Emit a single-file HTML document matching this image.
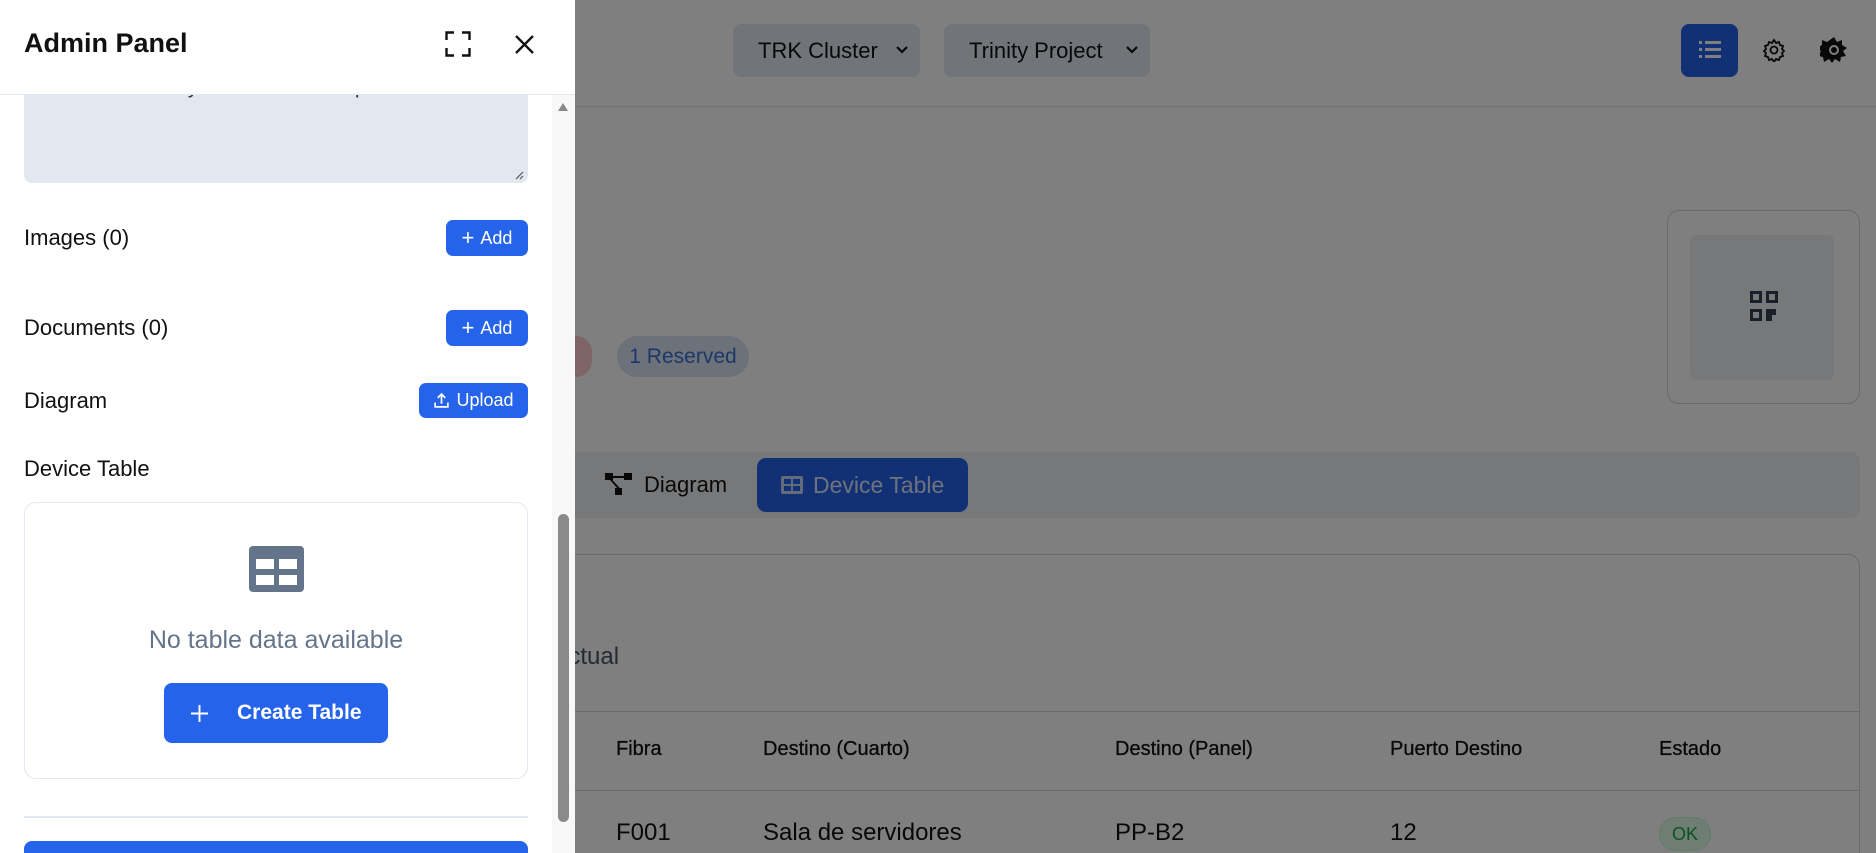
<!DOCTYPE html>
<html><head><meta charset="utf-8"><style>
*{box-sizing:border-box;margin:0;padding:0}
html,body{width:1876px;height:853px;overflow:hidden}
body{position:relative;background:#fff;font-family:"Liberation Sans",sans-serif;color:#111}
.abs{position:absolute}
.dd{position:absolute;top:24px;height:53px;background:#e2e8f0;border-radius:8px;font-size:22px;color:#111;display:flex;align-items:center;padding-left:25px}
.th{position:absolute;top:738px;font-size:20px;color:#111;-webkit-text-stroke:0.3px #111}
.td{position:absolute;top:819px;font-size:24px;color:#111}
.overlay{position:absolute;left:0;top:0;width:1876px;height:853px;background:rgba(0,0,0,.5)}
.panel{position:absolute;left:0;top:0;width:575px;height:853px;background:#fff;overflow:hidden}
.lbl{position:absolute;left:24px;font-size:22px;color:#111}
.btn{position:absolute;background:#2563eb;color:#fff;border-radius:7px;font-size:18px;display:flex;align-items:center;justify-content:center;gap:6px}
</style></head><body>
<div class="abs" style="left:0;top:106px;width:1876px;height:1px;background:#e5e7eb"></div>
<div class="dd" style="left:733px;width:187px">TRK Cluster<svg class="abs" style="left:162px;top:20px" width="14" height="12" viewBox="0 0 14 12"><path d="M2 3l5 5 5-5" stroke="#111" stroke-width="2.2" fill="none"/></svg></div>
<div class="dd" style="left:944px;width:206px">Trinity Project<svg class="abs" style="left:181px;top:20px" width="14" height="12" viewBox="0 0 14 12"><path d="M2 3l5 5 5-5" stroke="#111" stroke-width="2.2" fill="none"/></svg></div>
<div class="abs" style="left:1681px;top:24px;width:57px;height:53px;background:#2563eb;border-radius:8px"><svg class="abs" style="left:18px;top:16px" width="22" height="20" viewBox="0 0 22 20"><g fill="#fff"><rect x="0" y="1" width="3" height="3"/><rect x="6" y="1" width="16" height="3"/><rect x="0" y="8" width="3" height="3"/><rect x="6" y="8" width="16" height="3"/><rect x="0" y="15" width="3" height="3"/><rect x="6" y="15" width="16" height="3"/></g></svg></div>
<svg class="abs" style="left:1762px;top:38px" width="24" height="24" viewBox="0 0 24 24"><path d="M12 2l2 3 3-1 1 3 3 1-1 3 2 2-2 2 1 3-3 1-1 3-3-1-2 3-2-3-3 1-1-3-3-1 1-3-2-2 2-2-1-3 3-1 1-3 3 1z" fill="none" stroke="#111" stroke-width="1.8"/><circle cx="12" cy="12" r="3.5" fill="none" stroke="#111" stroke-width="1.8"/></svg>
<svg class="abs" style="left:1820px;top:36px" width="28" height="28" viewBox="0 0 28 28"><path d="M14 1l3 5 5-2 0 5 5 3-4 3 3 5-5 1-1 5-5-3-3 4-3-4-5 3-1-5-5-1 3-5-4-3 5-3 0-5 5 2z" fill="#111"/><circle cx="14" cy="14" r="5" fill="#fff"/><circle cx="14" cy="14" r="3" fill="#111"/></svg>
<div class="abs" style="left:1667px;top:210px;width:193px;height:194px;border:1px solid #d1d5db;border-radius:12px"></div>
<div class="abs" style="left:1690px;top:235px;width:144px;height:145px;background:#eef0f4;border-radius:6px"></div>
<svg class="abs" style="left:1750px;top:291px" width="28" height="31" viewBox="0 0 28 31"><g fill="#334155"><rect x="0" y="0" width="12" height="12"/><rect x="16" y="0" width="12" height="12"/><rect x="0" y="18" width="12" height="12"/><rect x="16" y="18" width="6" height="12"/><rect x="22" y="18" width="4" height="6"/></g><g fill="#eef0f4"><rect x="3" y="3" width="6" height="6"/><rect x="19" y="3" width="6" height="6"/><rect x="3" y="21" width="6" height="6"/></g></svg>
<div class="abs" style="left:560px;top:336px;width:32px;height:41px;border-radius:20px;background:#fecaca"></div>
<div class="abs" style="left:617px;top:336px;width:132px;height:41px;border-radius:20px;background:#dbe5f5;color:#3b6fd0;font-size:21px;display:flex;align-items:center;justify-content:center">1 Reserved</div>
<div class="abs" style="left:500px;top:452px;width:1360px;height:66px;background:#eef0f3;border-radius:10px"></div>
<svg class="abs" style="left:605px;top:473px" width="27" height="23" viewBox="0 0 27 23"><g fill="#111"><rect x="0" y="0" width="8" height="7"/><rect x="19" y="0" width="8" height="7"/><rect x="10" y="15" width="7" height="7"/><path d="M8 3h11v2H8zM5 7l8 9 1.5-1.3L6.5 6z"/></g></svg>
<div class="abs" style="left:644px;top:472px;font-size:22px;color:#111">Diagram</div>
<div class="abs" style="left:757px;top:458px;width:211px;height:54px;background:#2563eb;border-radius:9px;color:#dbe4fb;font-size:23px;display:flex;align-items:center;padding-left:24px;gap:10px"><svg width="22" height="18" viewBox="0 0 22 18"><rect width="22" height="18" rx="2" fill="#c7d4f7"/><g fill="#2563eb"><rect x="3" y="3" width="7" height="5"/><rect x="12" y="3" width="7" height="5"/><rect x="3" y="10" width="7" height="5"/><rect x="12" y="10" width="7" height="5"/></g></svg>Device Table</div>
<div class="abs" style="left:500px;top:554px;width:1360px;height:320px;border:1px solid #d1d5db;border-radius:12px;clip-path:inset(0 0 21px 0)"></div>
<div class="abs" style="left:555px;top:643px;font-size:24px;color:#4b5563">actual</div>
<div class="abs" style="left:500px;top:711px;width:1360px;height:1px;background:#d1d5db"></div>
<div class="abs" style="left:500px;top:790px;width:1360px;height:1px;background:#d1d5db"></div>
<div class="th" style="left:616px">Fibra</div>
<div class="th" style="left:763px">Destino (Cuarto)</div>
<div class="th" style="left:1115px">Destino (Panel)</div>
<div class="th" style="left:1390px">Puerto Destino</div>
<div class="th" style="left:1659px">Estado</div>
<div class="td" style="left:616px">F001</div>
<div class="td" style="left:763px">Sala de servidores</div>
<div class="td" style="left:1115px">PP-B2</div>
<div class="td" style="left:1390px">12</div>
<div class="abs" style="left:1659px;top:817px;width:52px;height:34px;border-radius:17px;background:#dcfce7;border:1px solid #bbf7d0;color:#16a34a;font-size:18px;display:flex;align-items:center;justify-content:center">OK</div>
<div class="overlay"></div>
<div class="panel">
  <div class="abs" style="left:24px;top:74px;width:504px;height:109px;background:#e2e8f0;border-radius:8px;overflow:hidden"><div style="position:absolute;left:18px;top:1px;font-size:21px;color:#333">administrativas y centro de datos primario.</div>
  <svg class="abs" style="left:490px;top:96px" width="10" height="10" viewBox="0 0 10 10"><path d="M9 2L2 9M9 6L6 9" stroke="#555" stroke-width="1.2"/></svg></div>
  <div class="abs" style="left:0;top:0;width:575px;height:95px;background:#fff;border-bottom:1px solid #e2e8f0"></div>
  <div class="abs" style="left:24px;top:28px;font-size:27px;font-weight:700;color:#111">Admin Panel</div>
  <svg class="abs" style="left:445px;top:31px" width="26" height="26" viewBox="0 0 26 26"><path d="M1.5 9V1.5H9M17 1.5h7.5V9M24.5 17v7.5H17M9 24.5H1.5V17" stroke="#111" stroke-width="2.4" fill="none"/></svg>
  <svg class="abs" style="left:515px;top:35px" width="19" height="19" viewBox="0 0 19 19"><path d="M1 1l17 17M18 1L1 18" stroke="#111" stroke-width="2.3"/></svg>
  <div class="abs" style="left:552px;top:95px;width:23px;height:758px;background:#f8f8f8"></div>
  <svg class="abs" style="left:557px;top:102px" width="12" height="10" viewBox="0 0 12 10"><path d="M6 1L11 9H1z" fill="#888"/></svg>
  <div class="abs" style="left:558px;top:514px;width:11px;height:308px;background:#8a8a8a;border-radius:6px"></div>
  <div class="lbl" style="top:225px">Images (0)</div>
  <div class="btn" style="left:446px;top:220px;width:82px;height:36px"><span style="font-size:22px">+</span>Add</div>
  <div class="lbl" style="top:315px">Documents (0)</div>
  <div class="btn" style="left:446px;top:310px;width:82px;height:36px"><span style="font-size:22px">+</span>Add</div>
  <div class="lbl" style="top:388px">Diagram</div>
  <div class="btn" style="left:419px;top:383px;width:109px;height:35px"><svg width="17" height="17" viewBox="0 0 16 16"><path d="M8 11V2M4.5 5.5L8 2l3.5 3.5M2 10v4h12v-4" stroke="#fff" stroke-width="1.6" fill="none"/></svg>Upload</div>
  <div class="lbl" style="top:456px">Device Table</div>
  <div class="abs" style="left:24px;top:502px;width:504px;height:277px;border:1px solid #e2e8f0;border-radius:12px"></div>
  <svg class="abs" style="left:249px;top:546px" width="55" height="46" viewBox="0 0 55 46"><rect width="55" height="46" rx="4" fill="#64748b"/><g fill="#fff"><rect x="7" y="13" width="18" height="10"/><rect x="30" y="13" width="18" height="10"/><rect x="7" y="29" width="18" height="10"/><rect x="30" y="29" width="18" height="10"/></g></svg>
  <div class="abs" style="left:24px;top:626px;width:504px;text-align:center;font-size:25px;color:#64748b">No table data available</div>
  <div class="abs" style="left:164px;top:683px;width:224px;height:60px;background:#2563eb;border-radius:8px;color:#fff;font-size:21px;font-weight:700"><svg class="abs" style="left:27px;top:22px" width="17" height="17" viewBox="0 0 16 16"><path d="M8 0v16M0 8h16" stroke="#fff" stroke-width="1.8"/></svg><span class="abs" style="left:73px;top:18px">Create Table</span></div>
  <div class="abs" style="left:24px;top:816px;width:504px;height:2px;background:#e2e8f0"></div>
  <div class="abs" style="left:24px;top:841px;width:504px;height:30px;background:#2563eb;border-radius:8px"></div>
</div>
</body></html>
